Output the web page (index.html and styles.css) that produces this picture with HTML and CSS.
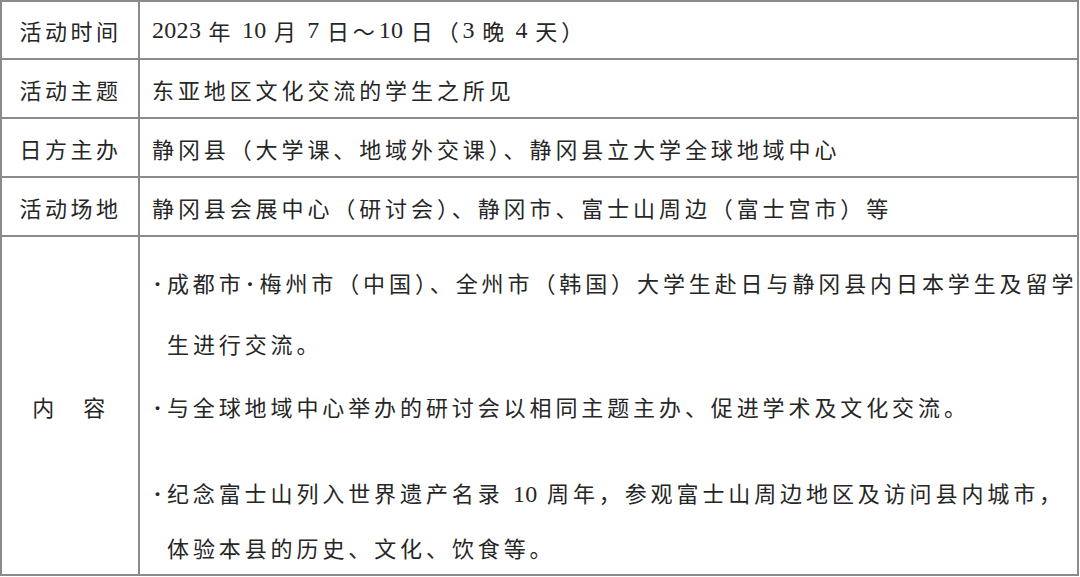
FILE: index.html
```html
<!DOCTYPE html>
<html lang="zh-CN">
<head>
<meta charset="utf-8">
<title>活动概要</title>
<link rel="stylesheet" href="styles.css">
</head>
<body>
<div class="table">
  <div class="cell label">活动时间</div>
  <div class="cell value date"><span class="num">2023</span> 年 <span class="num">10</span> 月 <span class="num">7</span> 日～<span class="num">10</span> 日（<span class="num">3</span> 晚 <span class="num">4</span> 天）</div>

  <div class="cell label">活动主题</div>
  <div class="cell value">东亚地区文化交流的学生之所见</div>

  <div class="cell label">日方主办</div>
  <div class="cell value">静冈县（大学课、地域外交课）、静冈县立大学全球地域中心</div>

  <div class="cell label">活动场地</div>
  <div class="cell value">静冈县会展中心（研讨会）、静冈市、富士山周边（富士宫市）等</div>

  <div class="cell label">内　容</div>
  <div class="cell content">
    <p class="item item-1"><span class="dot">·</span>成都市<span class="dot">·</span>梅州市（中国）、全州市（韩国）大学生赴日与静冈县内日本学生及留学<br>生进行交流。</p>
    <p class="item item-2"><span class="dot">·</span>与全球地域中心举办的研讨会以相同主题主办、促进学术及文化交流。</p>
    <p class="item item-3"><span class="dot">·</span>纪念富士山列入世界遗产名录 <span class="num">10</span> 周年，参观富士山周边地区及访问县内城市，<br>体验本县的历史、文化、饮食等。</p>
  </div>
</div>
</body>
</html>
```

FILE: styles.css
```css
html, body {
  margin: 0;
  padding: 0;
  background: #ffffff;
}

body {
  font-family: "Liberation Serif", "Noto Sans CJK SC", serif;
  font-size: 22px;
  color: #262626;
  letter-spacing: 3.9px;
}

.table {
  display: grid;
  grid-template-columns: 138px 939px;
  grid-template-rows: 58px 59px 59px 59px 339px;
  width: 1077px;
  border-top: 2px solid #8a8a8a;
  border-left: 2px solid #8a8a8a;
}

.cell {
  box-sizing: border-box;
  border-right: 2px solid #8a8a8a;
  border-bottom: 2px solid #8a8a8a;
  min-width: 0;
}

.label {
  display: flex;
  align-items: center;
  justify-content: center;
  padding-left: 1px;
  letter-spacing: 3.5px;
  white-space: nowrap;
}

.value {
  display: flex;
  align-items: center;
  padding-left: 12px;
  white-space: pre;
}

.date {
  word-spacing: -2px;
}

.num {
  font-size: 24px;
  letter-spacing: 0.3px;
}

.content {
  padding: 17px 0 0 27px;
  overflow: visible;
}

.item {
  margin: 0;
  white-space: nowrap;
  text-indent: -15px;
}

.item-1 {
  line-height: 61px;
}

.item-2 {
  line-height: 61px;
  margin-top: 2px;
}

.item-3 {
  line-height: 55px;
  margin-top: 28px;
}

.dot {
  display: inline-block;
  width: 11px;
  text-align: center;
  text-indent: 0;
  letter-spacing: 0;
  margin-right: 3.9px;
  font-weight: bold;
  font-size: 24px;
  line-height: 1;
}
```
